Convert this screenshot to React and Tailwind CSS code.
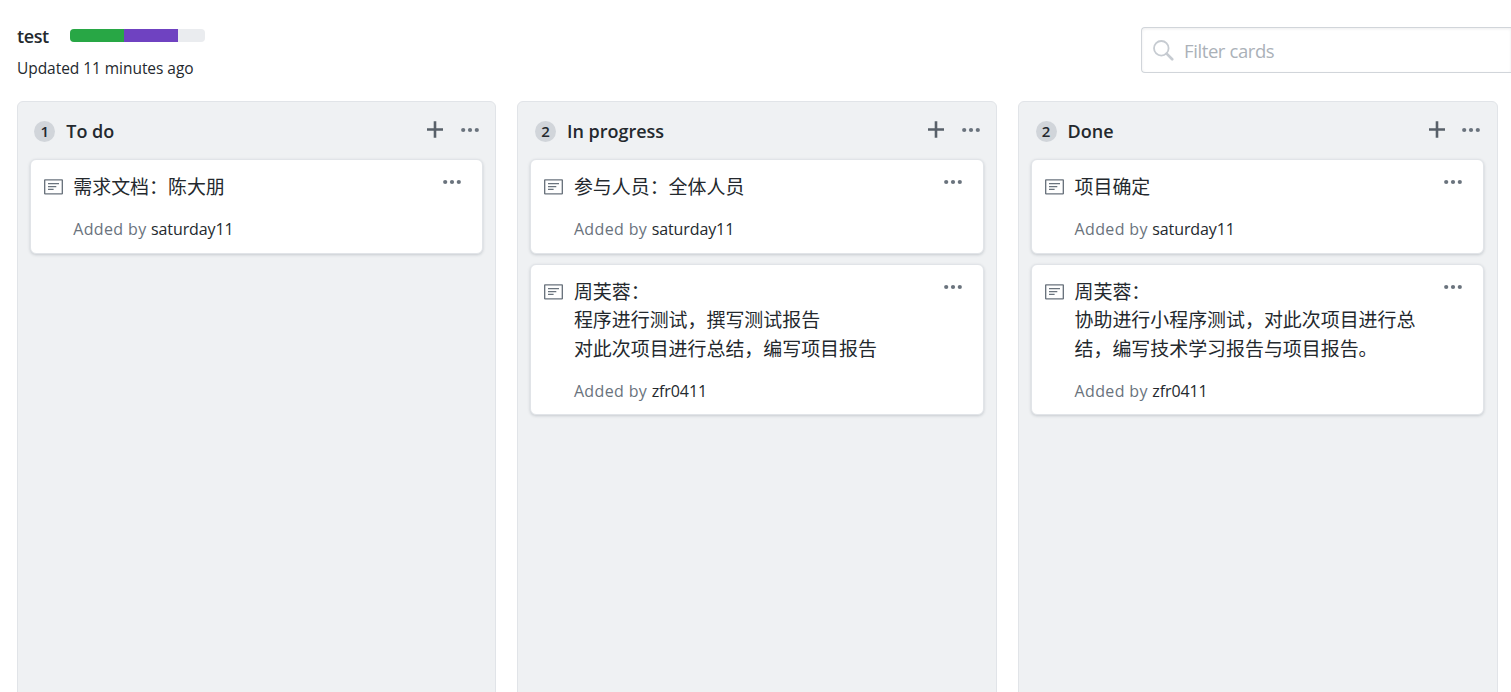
const columns = [
  {
    title: 'To do',
    cards: [{ lines: ['需求文档：陈大朋'], author: 'saturday11' }],
  },
  {
    title: 'In progress',
    cards: [
      { lines: ['参与人员：全体人员'], author: 'saturday11' },
      { lines: ['周芙蓉：', '程序进行测试，撰写测试报告', '对此次项目进行总结，编写项目报告'], author: 'zfr0411' },
    ],
  },
  {
    title: 'Done',
    cards: [
      { lines: ['项目确定'], author: 'saturday11' },
      { lines: ['周芙蓉：', '协助进行小程序测试，对此次项目进行总结，编写技术学习报告与项目报告。'], author: 'zfr0411' },
    ],
  },
];

function NoteIcon() {
  return (
    <svg width="19" height="16" viewBox="0 0 19 16" fill="none" stroke="#6a737d" className="mt-[10px] shrink-0">
      <rect x="0.65" y="0.85" width="17.7" height="14" rx="0.4" strokeWidth="1.4" />
      <path d="M4 4.6h11M4 7.6h8.3M4 10.4h5.6" strokeWidth="1.3" />
    </svg>
  );
}

function PlusIcon() {
  return (
    <svg width="16" height="17" viewBox="0 0 16 17" fill="#586069">
      <path d="M6.7 0.2h2.6v7h6.7v2.6H9.3v7H6.7v-7H0V7.2h6.7z" />
    </svg>
  );
}

function DotsIcon() {
  return (
    <svg width="18" height="6" viewBox="0 0 18 6" fill="#6a737d">
      <circle cx="2.2" cy="3" r="2.1" />
      <circle cx="9" cy="3" r="2.1" />
      <circle cx="15.8" cy="3" r="2.1" />
    </svg>
  );
}

function SearchIcon() {
  return (
    <svg width="21" height="21" viewBox="0 0 21 21" fill="none" stroke="#c6cbd1">
      <circle cx="8.3" cy="8.3" r="7.3" strokeWidth="1.8" />
      <path d="M13.6 13.6l5.6 5.6" strokeWidth="2.7" strokeLinecap="round" />
    </svg>
  );
}

function Card({ card }) {
  return (
    <article className="flex rounded-[6px] border border-[#e1e4e8] bg-white pr-[21.2px] pb-[10.6px] pl-[12.9px] pt-[9px] shadow-[0_1px_3px_rgba(106,115,125,0.3)]">
      <NoteIcon />
      <div className="ml-[10.6px] w-[350px] shrink-0">
        <div className="pt-[4px] text-[18.96px] leading-[28.4px]">
          {card.lines.map((line) => (
            <p key={line}>{line}</p>
          ))}
        </div>
        <p className="mt-[14.6px] text-[16px] leading-[26px] tracking-[0.35px] text-[#6a737d]">
          Added by <span className="tracking-[-0.1px] text-[#24292e]">{card.author}</span>
        </p>
      </div>
      <button className="mt-[10px] ml-auto flex h-6 items-start">
        <DotsIcon />
      </button>
    </article>
  );
}

function Column({ column }) {
  return (
    <section className="h-[620px] w-[479.6px] shrink-0 rounded-[6px] border border-[#e1e4e8] bg-[#eff1f3]">
      <header className="flex h-[57.2px] items-center pr-[16.2px] pl-[16.6px]">
        <span className="mt-[2px] flex h-[21px] w-[21px] items-center justify-center rounded-full bg-[#d1d5da] text-[15px] leading-none font-semibold">
          {column.cards.length}
        </span>
        <h3 className="mt-[1px] ml-[11px] text-[18px] leading-7 font-semibold">{column.title}</h3>
        <button className="mt-[-2px] ml-auto">
          <PlusIcon />
        </button>
        <button className="mt-[-1px] ml-[17.7px]">
          <DotsIcon />
        </button>
      </header>
      <div className="flex flex-col gap-[10.3px] px-[12.1px]">
        {column.cards.map((card) => (
          <Card key={card.lines[0]} card={card} />
        ))}
      </div>
    </section>
  );
}

export default function App() {
  return (
    <div className="h-[692px] w-full overflow-hidden bg-white font-['Open_Sans','Noto_Sans_CJK_SC',sans-serif] text-[#24292e]">
      <div className="flex h-[101px] justify-between pl-[17px]">
        <div className="pt-[22px]">
          <div className="flex h-7 items-center">
            <h1 className="w-[53px] text-[18px] leading-7 font-semibold tracking-[-0.4px]">test</h1>
            <div className="mb-[2px] flex h-[13px] w-[135px] overflow-hidden rounded-[4px] bg-[#eaecef]">
              <div className="w-[54px] bg-[#28a745]" />
              <div className="w-[54px] bg-[#6f42c1]" />
            </div>
          </div>
          <p className="mt-[6px] text-[15.5px] leading-6 tracking-[-0.05px]">Updated 11 minutes ago</p>
        </div>
        <div className="mt-[27px] flex h-[46px] w-[370px] items-center rounded-l-[4px] border border-r-0 border-[#d1d5da] pl-[11px] shadow-[inset_0_1px_3px_rgba(27,31,35,0.08)]">
          <SearchIcon />
          <span className="mt-[2px] ml-[10px] text-[18.5px] tracking-[-0.4px] text-[#abb1b8]">Filter cards</span>
        </div>
      </div>
      <main className="flex gap-[21.05px] pl-[16.7px]">
        {columns.map((column) => (
          <Column key={column.title} column={column} />
        ))}
      </main>
    </div>
  );
}
